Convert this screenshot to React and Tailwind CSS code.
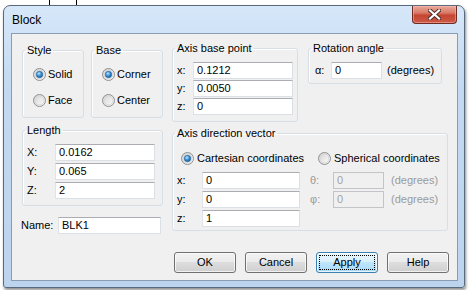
import React from 'react';

// Win7 style "Block" dialog

const Radio = ({ checked }) => (
  <svg width="13" height="13" viewBox="0 0 13 13" className="shrink-0">
    <circle cx="6.5" cy="6.5" r="6" fill="url(#radioBg)" stroke="#8e8f8f" />
    <circle cx="6.5" cy="6.5" r="4.5" fill="none" stroke="#d6d6d6" strokeWidth="1" />
    {checked && <circle cx="6.5" cy="6.5" r="3.2" fill="url(#radioDot)" stroke="#1b5a96" strokeWidth="0.6" />}
  </svg>
);

const Field = ({ value, className = '', disabled }) => (
  <div
    className={`h-[17px] border flex items-center pl-[3px] leading-none ${
      disabled
        ? 'bg-[#f0f0f0] border-[#c2c4c8] text-[#a3a3a3]'
        : 'bg-white border-[#abadb3] border-b-[#dbdfe6] border-r-[#dbdfe6] border-l-[#e2e3ea]'
    } ${className}`}
  >
    {value}
  </div>
);

const Group = ({ title, className = '', children }) => (
  <fieldset className={`border border-[#d5dfe5] rounded-[3px] shadow-[inset_1px_1px_0_#fff] ${className}`}>
    <legend className="ml-[2px] px-[2px] leading-[13px]">{title}</legend>
    {children}
  </fieldset>
);

const Button = ({ children, focused }) => (
  <div
    className={`w-[62px] h-[21px] rounded-[3px] border flex items-center justify-center p-[2px] ${
      focused
        ? 'border-[#3c7fb1] bg-[linear-gradient(to_bottom,#eaf6fd_0%,#d9f0fc_45%,#bee6fd_50%,#a7d9f5_100%)]'
        : 'border-[#707070] bg-[linear-gradient(to_bottom,#f2f2f2_0%,#ebebeb_45%,#dddddd_50%,#cfcfcf_100%)]'
    } shadow-[inset_0_0_0_1px_rgba(255,255,255,0.7)]`}
  >
    <div
      className={`w-full h-full flex items-center justify-center ${
        focused ? 'border border-dotted border-black' : ''
      }`}
    >
      {children}
    </div>
  </div>
);

export default function App() {
  return (
    <div className="w-[469px] h-[290px] bg-white overflow-hidden font-['Liberation_Sans',Arial,sans-serif] text-[11px] text-black">
      <svg width="0" height="0" className="absolute">
        <defs>
          <linearGradient id="radioBg" x1="0" y1="0" x2="1" y2="1">
            <stop offset="0" stopColor="#d2d2d2" />
            <stop offset="1" stopColor="#ffffff" />
          </linearGradient>
          <radialGradient id="radioDot" cx="0.4" cy="0.35" r="0.7">
            <stop offset="0" stopColor="#c6e6fb" />
            <stop offset="0.5" stopColor="#3c93d8" />
            <stop offset="1" stopColor="#17579a" />
          </radialGradient>
        </defs>
      </svg>

      {/* bits of whatever is behind the window */}
      <div className="flex h-[5px]">
        <div className="w-[49px]" />
        <div className="w-px bg-black" />
        <div className="w-[26px]" />
        <div className="w-px bg-black" />
      </div>

      <div className="ml-[3px] w-[462px] h-[283px] rounded-t-[7px] rounded-b-[3px] border border-[#5a6a7e] bg-[linear-gradient(to_bottom,#d6e7f9_0%,#c3d9f1_30%,#bcd4ee_100%)] flex flex-col shadow-[1px_2px_3px_rgba(0,0,0,0.45)]">
        {/* title bar */}
        <div className="h-[27px] flex items-start shrink-0">
          <div className="pl-[8px] pt-[7px] text-[12px] leading-[15px]">Block</div>
          <div className="ml-auto mr-[7px] w-[45px] h-[18px] rounded-b-[4px] border border-t-0 border-[#6f2a22] bg-[linear-gradient(to_bottom,#e9a99a_0%,#d97b68_40%,#c64531_55%,#cc5a47_100%)] flex items-center justify-center shadow-[inset_0_0_0_1px_rgba(255,200,190,0.45)]">
            <svg width="13" height="11" viewBox="0 0 13 11">
              <path d="M2 1.5 L11 9.5 M11 1.5 L2 9.5" stroke="#4a2a26" strokeWidth="4" strokeLinecap="square" />
              <path d="M2 1.5 L11 9.5 M11 1.5 L2 9.5" stroke="#ffffff" strokeWidth="2.2" strokeLinecap="square" />
            </svg>
          </div>
        </div>

        {/* client area */}
        <div className="ml-[7px] mr-[6px] mb-[6px] flex-1 border border-[#8b9cb2] bg-[#f0f0f0] flex pl-[10px] pt-[8px]">
          {/* left column */}
          <div className="w-[141px] mt-[2px] flex flex-col">
            <div className="flex gap-[7px]">
              <Group title="Style" className="w-[62px] h-[74px]">
                <div className="flex flex-col gap-[13px] pl-[10px] pt-[11px]">
                  <div className="flex items-center gap-[2px] h-[13px]"><Radio checked />Solid</div>
                  <div className="flex items-center gap-[2px] h-[13px]"><Radio />Face</div>
                </div>
              </Group>
              <Group title="Base" className="w-[72px] h-[74px]">
                <div className="flex flex-col gap-[13px] pl-[10px] pt-[11px]">
                  <div className="flex items-center gap-[2px] h-[13px]"><Radio checked />Corner</div>
                  <div className="flex items-center gap-[2px] h-[13px]"><Radio />Center</div>
                </div>
              </Group>
            </div>

            <Group title="Length" className="mt-[6px] h-[82px]">
              <div className="flex flex-col gap-[2px] pl-[4px] pt-[7px]">
                {[['X:', '0.0162'], ['Y:', '0.065'], ['Z:', '2']].map(([l, v]) => (
                  <div key={l} className="flex items-center">
                    <span className="w-[28px]">{l}</span>
                    <Field value={v} className="w-[100px]" />
                  </div>
                ))}
              </div>
            </Group>

            <div className="flex items-center mt-[11px] pl-[-1px]">
              <span className="w-[37px] -ml-px">Name:</span>
              <Field value="BLK1" className="w-[103px]" />
            </div>
          </div>

          {/* right column */}
          <div className="w-[276px] ml-[9px] flex flex-col">
            <div className="flex gap-[10px] items-start">
              <Group title="Axis base point" className="w-[126px] h-[80px]">
                <div className="flex flex-col gap-[1px] pl-[4px] pt-[7px]">
                  {[['x:', '0.1212'], ['y:', '0.0050'], ['z:', '0']].map(([l, v]) => (
                    <div key={l} className="flex items-center">
                      <span className="w-[16px]">{l}</span>
                      <Field value={v} className="w-[100px]" />
                    </div>
                  ))}
                </div>
              </Group>
              <Group title="Rotation angle" className="w-[134px] h-[42px]">
                <div className="flex items-center pl-[6px] pt-[7px]">
                  <span className="w-[16px]">α:</span>
                  <Field value="0" className="w-[51px]" />
                  <span className="ml-[5px]">(degrees)</span>
                </div>
              </Group>
            </div>

            <Group title="Axis direction vector" className="mt-[5px] h-[104px]">
              <div className="flex items-center pl-[8px] pt-[11px] h-[26px]">
                <div className="w-[137px] flex items-center gap-[3px]"><Radio checked />Cartesian coordinates</div>
                <div className="flex items-center gap-[3px]"><Radio />Spherical coordinates</div>
              </div>
              <div className="flex flex-col gap-[2px] pl-[4px] pt-[6px]">
                {[
                  ['x:', '0', 'θ:', '0'],
                  ['y:', '0', 'φ:', '0'],
                  ['z:', '1', null, null],
                ].map(([l, v, l2, v2]) => (
                  <div key={l} className="flex items-center">
                    <span className="w-[25px]">{l}</span>
                    <Field value={v} className="w-[98px]" />
                    {l2 && (
                      <>
                        <span className="ml-[10px] w-[23px] text-[#9a9a9a]">{l2}</span>
                        <Field value={v2} disabled className="w-[51px]" />
                        <span className="ml-[7px] text-[#9a9a9a]">(degrees)</span>
                      </>
                    )}
                  </div>
                ))}
              </div>
            </Group>

            <div className="flex justify-end gap-[9px] mt-[21px] -mr-px">
              <Button>OK</Button>
              <Button>Cancel</Button>
              <Button focused>Apply</Button>
              <Button>Help</Button>
            </div>
          </div>
        </div>
      </div>
    </div>
  );
}
